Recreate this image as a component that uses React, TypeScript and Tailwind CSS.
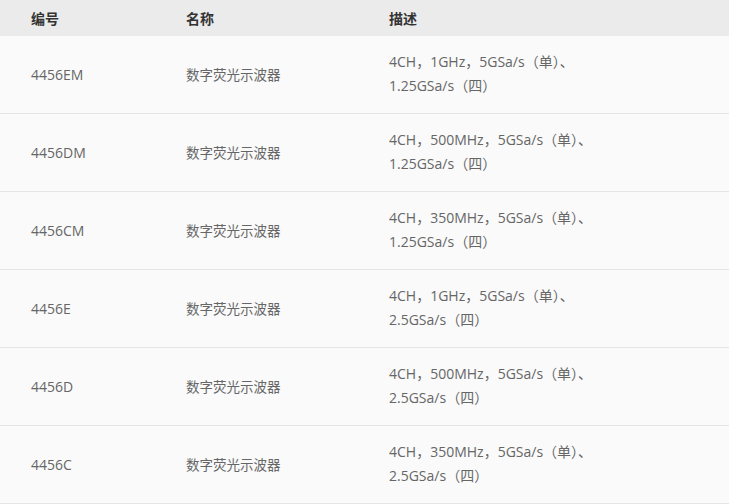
import React from "react";

const rows = [
  { code: "4456EM", desc: ["4CH，1GHz，5GSa/s（单）、", "1.25GSa/s（四）"] },
  { code: "4456DM", desc: ["4CH，500MHz，5GSa/s（单）、", "1.25GSa/s（四）"] },
  { code: "4456CM", desc: ["4CH，350MHz，5GSa/s（单）、", "1.25GSa/s（四）"] },
  { code: "4456E", desc: ["4CH，1GHz，5GSa/s（单）、", "2.5GSa/s（四）"] },
  { code: "4456D", desc: ["4CH，500MHz，5GSa/s（单）、", "2.5GSa/s（四）"] },
  { code: "4456C", desc: ["4CH，350MHz，5GSa/s（单）、", "2.5GSa/s（四）"] },
];

const App = () => {
  return (
    <div
      className="w-[729px] h-[504px] overflow-hidden bg-white"
      style={{ fontFamily: '"Open Sans", "Noto Sans CJK SC", sans-serif' }}
    >
      <div className="grid grid-cols-[155px_203px_1fr] h-[36px] items-center bg-[#ebebeb] text-[14px] font-bold text-[#333]">
        <div className="pl-[31px]">编号</div>
        <div className="pl-[31px]">名称</div>
        <div className="pl-[31px]">描述</div>
      </div>
      {rows.map((row) => (
        <div
          key={row.code}
          className="grid grid-cols-[155px_203px_1fr] h-[78px] items-center bg-[#fafafa] border-b border-[#e5e5e5] text-[14px] leading-[24px] text-[#666]"
        >
          <div className="pl-[31px]">{row.code}</div>
          <div className="pl-[31px] text-[13.5px]">数字荧光示波器</div>
          <div className="pl-[31px] pb-[1px]">
            {row.desc.map((line) => (
              <div key={line}>{line}</div>
            ))}
          </div>
        </div>
      ))}
    </div>
  );
};

export default App;
